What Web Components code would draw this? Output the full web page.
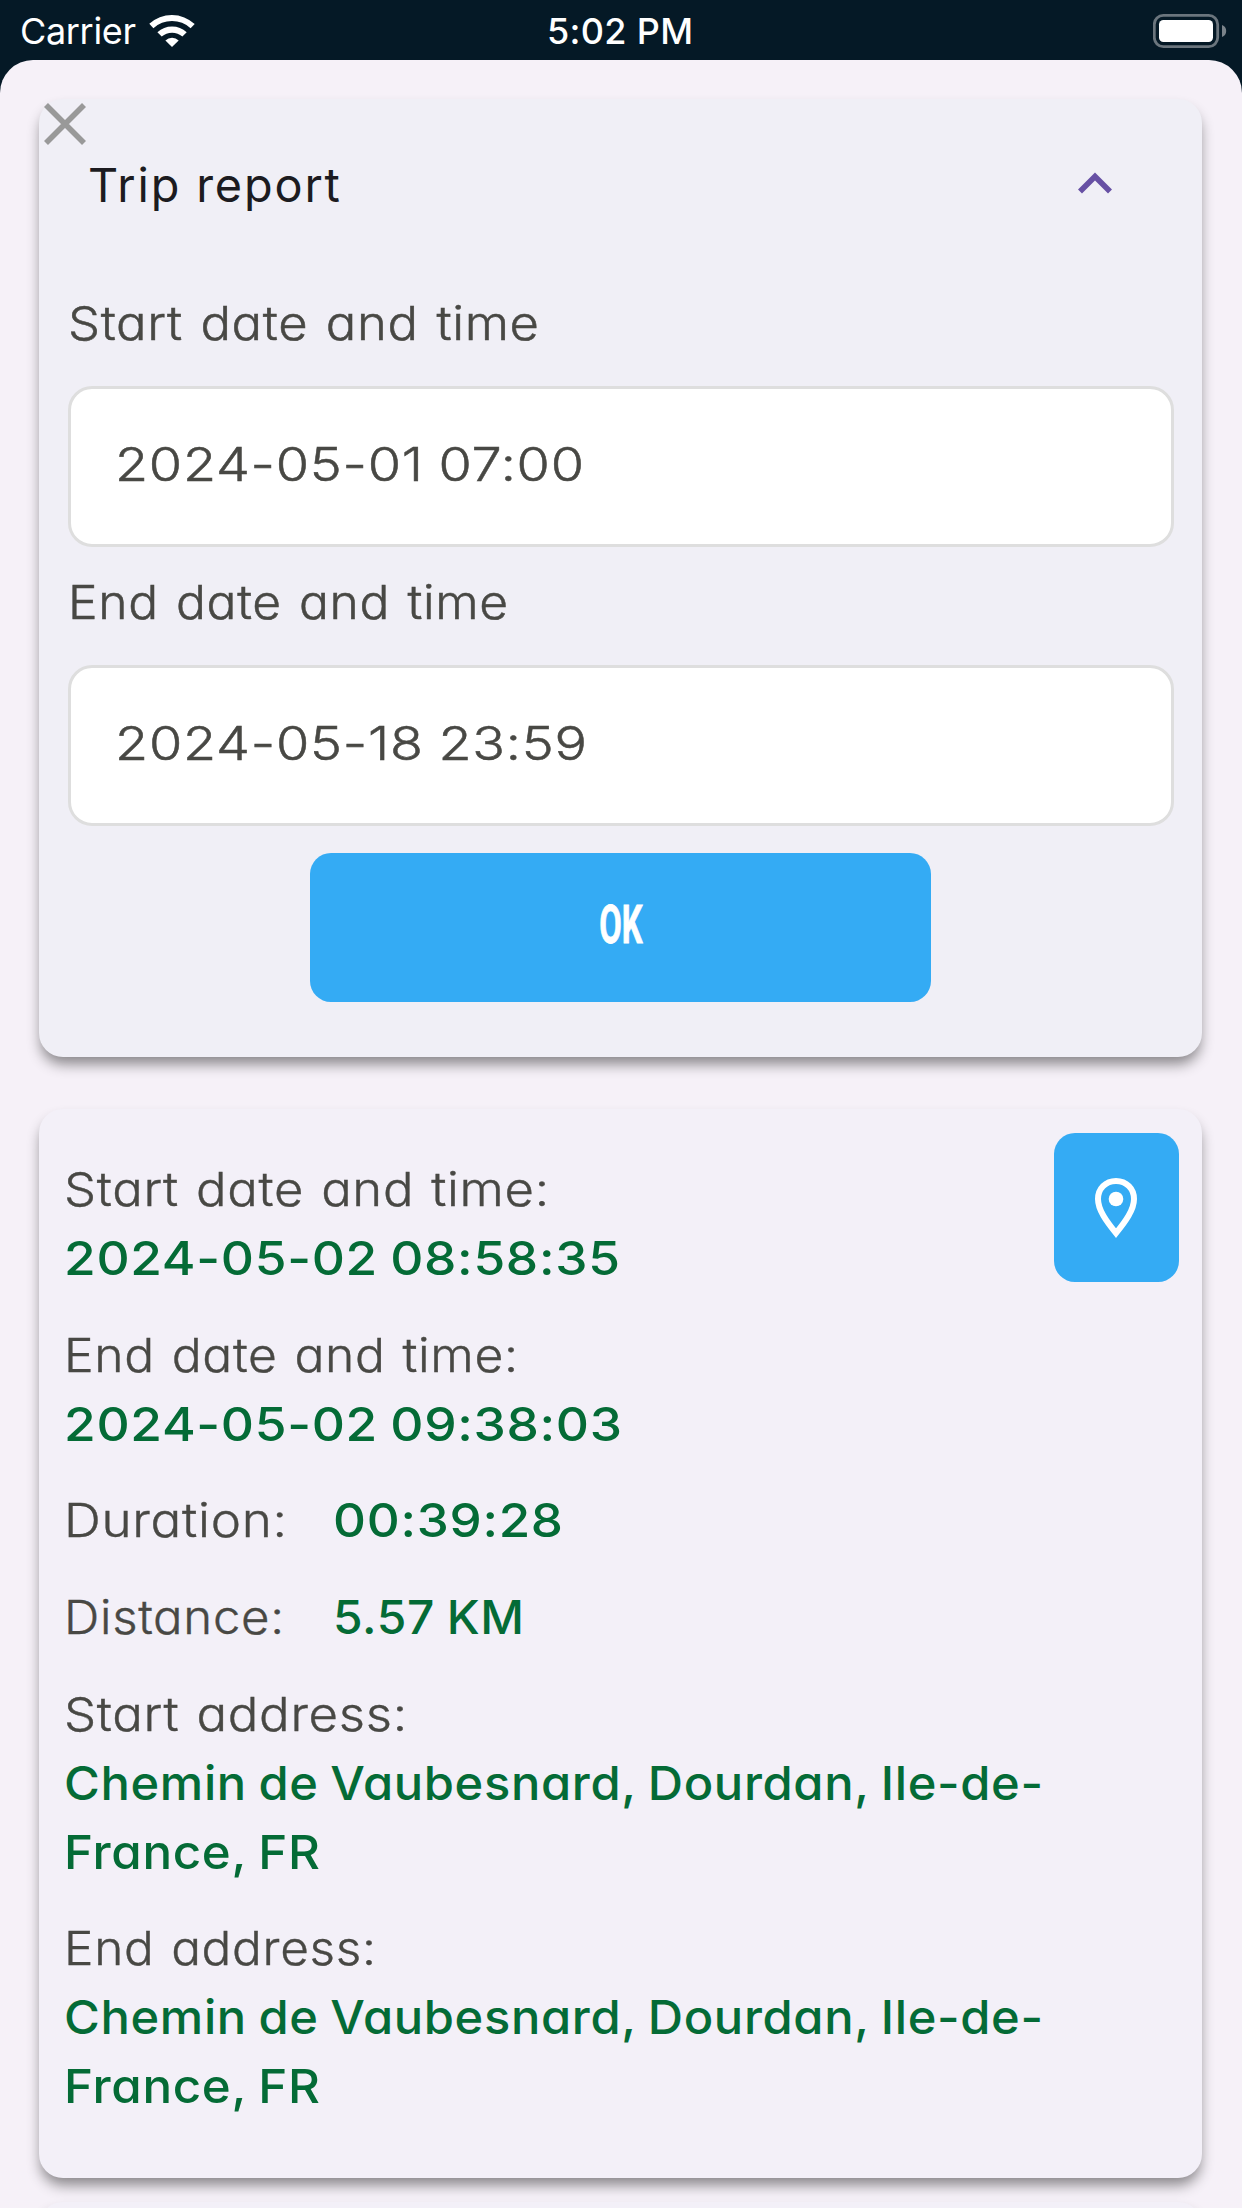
<!DOCTYPE html>
<html lang="en">
<head>
<meta charset="utf-8">
<title>Trip report</title>
<style>
html,body{margin:0;padding:0}
body{width:1242px;height:2208px;overflow:hidden;background:#051926;font-family:Inter,"Liberation Sans",sans-serif}
</style>
</head>
<body>
<trip-app></trip-app>
<script>
const define = (name, html, setup) => customElements.define(name, class extends HTMLElement {
  connectedCallback() {
    if (!this.shadowRoot) this.attachShadow({ mode: 'open' }).innerHTML = html;
    if (setup) setup(this, this.shadowRoot);
  }
});

/* One line of text that spans the width given in "w": widened glyphs if "wide" is set, then tracking. */
define('tracked-text', `
<style>
:host{display:block;white-space:nowrap}
span{display:inline-block;transform-origin:0 50%}
</style><span></span>`, (el, root) => {
  const text = el.getAttribute('text');
  if (!text) return;
  const s = root.querySelector('span');
  s.textContent = text;
  let w = parseFloat(el.getAttribute('w'));
  s.style.letterSpacing = '0px';
  const natural = s.getBoundingClientRect().width;
  if (el.hasAttribute('wide')) {
    const k = Math.min(1.2, Math.max(1, w / (natural + 0.6 * text.length)));
    s.style.transform = 'scaleX(' + k.toFixed(4) + ')';
    w /= k;
  }
  const gap = (w - natural) / (text.length - 1);
  s.style.letterSpacing = gap.toFixed(3) + 'px';
  s.style.marginRight = (-gap).toFixed(3) + 'px';
});

define('status-bar', `
<style>
:host{display:grid;grid-template-columns:1fr auto 1fr;align-items:center;height:60px;box-sizing:border-box;padding:2px 15px 0 20px;color:#fff;font-size:36px;line-height:58px}
.l{display:flex;align-items:center;gap:12px}
.r{display:flex;justify-content:flex-end}
.t{font-weight:500;margin-right:7px}
svg{display:block}
</style>
<div class="l"><tracked-text text="Carrier" w="116"></tracked-text>
<svg width="48" height="36" viewBox="148 12 48 36" style="margin-top:-1px" fill="#fff"><path d="M149.3 22.8a33.6 33.6 0 0 1 45.4 0.2l-4.1 4.3a27.2 27.2 0 0 0-37.2-.1z"/><path d="M157.4 31.2a22 22 0 0 1 29.3 0l-4.3 4.4a15.5 15.5 0 0 0-20.7 0z"/><path d="M165.4 39.4a9.9 9.9 0 0 1 13.3 0l-6.7 6.6z"/></svg></div>
<tracked-text class="t" text="5:02 PM" w="146"></tracked-text>
<div class="r"><svg width="74" height="36" viewBox="1153 12 74 36" style="margin-top:-1px"><rect x="1154.3" y="14.4" width="63.4" height="31.2" rx="9" fill="none" stroke="#6b757d" stroke-width="2.8"/><rect x="1159" y="19" width="54" height="22" rx="4.5" fill="#fff"/><path d="M1222 24a6.4 6.4 0 0 1 0 12z" fill="#7a838a"/></svg></div>`);

define('app-card', `
<style>
:host{display:block;box-sizing:border-box;border-radius:24px;background:var(--card,#f3f0f8);box-shadow:0 9px 14px -2px rgba(0,0,0,.45)}
</style><slot></slot>`);

define('date-field', `
<style>
:host{display:block;color:#484844;font-size:46.8px;font-weight:300;line-height:69px;font-feature-settings:"cv11";-webkit-text-stroke:.5px currentColor}
.label{margin:0 0 28.5px 0;word-spacing:2.5px}
.box{height:161px;box-sizing:border-box;border:3px solid #dedede;border-radius:24px;background:#fff;padding:40.5px 0 0 44.5px;word-spacing:-1px}
</style>
<tracked-text wide class="label"></tracked-text>
<div class="box"><tracked-text wide class="value"></tracked-text></div>`, (el, root) => {
  for (const k of ['label', 'value']) {
    const t = root.querySelector('.' + k);
    t.setAttribute('text', el.getAttribute(k));
    t.setAttribute('w', el.getAttribute(k + '-w'));
    t.connectedCallback();
  }
});

define('blue-button', `
<style>
:host{display:flex;align-items:center;justify-content:center;box-sizing:border-box;height:149px;border-radius:21px;background:#34abf4;color:#fff}
</style><slot></slot>`);

define('report-row', `
<style>
:host{display:block;line-height:69px;font-size:46.8px;font-weight:300;color:#484844;font-feature-settings:"cv11";word-spacing:2px;-webkit-text-stroke:.4px currentColor}
:host([inline]){display:flex}
.value{color:#046b36;font-weight:500;word-spacing:-2px;-webkit-text-stroke:0}
</style>
<slot name="label"></slot><div class="value"><slot></slot></div>`);

define('trip-app', `
<style>
:host{display:flex;flex-direction:column;height:2208px}
.sheet{flex:1;box-sizing:border-box;background:#f6f1f8;border-radius:33px 33px 0 0;padding:39px 39.600px 0 39.400px;overflow:hidden;display:flex;flex-direction:column;position:relative}
.close{position:absolute;left:44px;top:43px;display:block}
.filter{--card:#f0eff6;height:958px;flex:none;padding:51.5px 28.5px 0}
.head{display:flex;justify-content:space-between;align-items:center;height:69px;padding:0 62px 0 20px;color:#1c1b20;font-size:46.8px;line-height:69px;margin-bottom:69px}
.head svg{margin-top:-4px}
.filter date-field+date-field{margin-top:20.5px}
.ok{width:621px;margin:27px auto 0}
.ok span{font:700 53.5px/60px Roboto,"Liberation Sans",sans-serif;transform:translate(.5px,-3.5px) scaleX(.61);display:block;-webkit-text-stroke:.8px currentColor}
.trip{height:1069px;flex:none;margin-top:52px;padding:24px 23.5px 0 24.5px;display:flex;align-items:flex-start;justify-content:space-between}
.rows{display:flex;flex-direction:column;gap:27.7px;padding-top:22px}
.pin{width:125px}
.next{flex:none;height:200px;margin-top:24px}
</style>
<status-bar></status-bar>
<div class="sheet">
  <app-card class="filter">
    <div class="head"><tracked-text text="Trip report" w="252"></tracked-text>
      <svg width="34" height="24" viewBox="0 0 34 24" fill="none" stroke="#6750a4" stroke-width="5.6"><path d="M2 20.5 17 5.500 32 20.500"/></svg></div>
    <date-field label="Start date and time" label-w="471" value="2024-05-01 07:00" value-w="469"></date-field>
    <date-field label="End date and time" label-w="440" value="2024-05-18 23:59" value-w="472"></date-field>
    <blue-button class="ok"><span>OK</span></blue-button>
  </app-card>
  <app-card class="trip">
    <div class="rows">
      <report-row><tracked-text wide slot="label" text="Start date and time:" w="485"></tracked-text><tracked-text wide text="2024-05-02 08:58:35" w="556"></tracked-text></report-row>
      <report-row><tracked-text wide slot="label" text="End date and time:" w="454"></tracked-text><tracked-text wide text="2024-05-02 09:38:03" w="558"></tracked-text></report-row>
      <report-row inline><tracked-text wide slot="label" text="Duration:" w="223" style="width:269px"></tracked-text><tracked-text wide text="00:39:28" w="230"></tracked-text></report-row>
      <report-row inline><tracked-text wide slot="label" text="Distance:" w="220" style="width:269px"></tracked-text><tracked-text wide text="5.57 KM" w="191"></tracked-text></report-row>
      <report-row><tracked-text wide slot="label" text="Start address:" w="343"></tracked-text><tracked-text wide text="Chemin de Vaubesnard, Dourdan, Ile-de-" w="979"></tracked-text><tracked-text wide text="France, FR" w="256"></tracked-text></report-row>
      <report-row><tracked-text wide slot="label" text="End address:" w="312"></tracked-text><tracked-text wide text="Chemin de Vaubesnard, Dourdan, Ile-de-" w="979"></tracked-text><tracked-text wide text="France, FR" w="256"></tracked-text></report-row>
    </div>
    <blue-button class="pin"><svg width="44" height="62" viewBox="1095 1177 44 62"><path d="M1117 1181c-10.500 0-18 7.800-18 18 0 11 8.500 22.500 18 34.200 9.500-11.700 18-23.200 18-34.200 0-10.200-7.500-18-18-18z" fill="none" stroke="#fff" stroke-width="6"/><circle cx="1117" cy="1199" r="7.300" fill="#fff"/></svg></blue-button>
  </app-card>
  <app-card class="next"></app-card>
  <svg class="close" width="42" height="42" viewBox="0 0 42 42" stroke="#999" stroke-width="5.600"><path d="M2 2 40 40M40 2 2 40"/></svg>
</div>`);
</script>
</body>
</html>
